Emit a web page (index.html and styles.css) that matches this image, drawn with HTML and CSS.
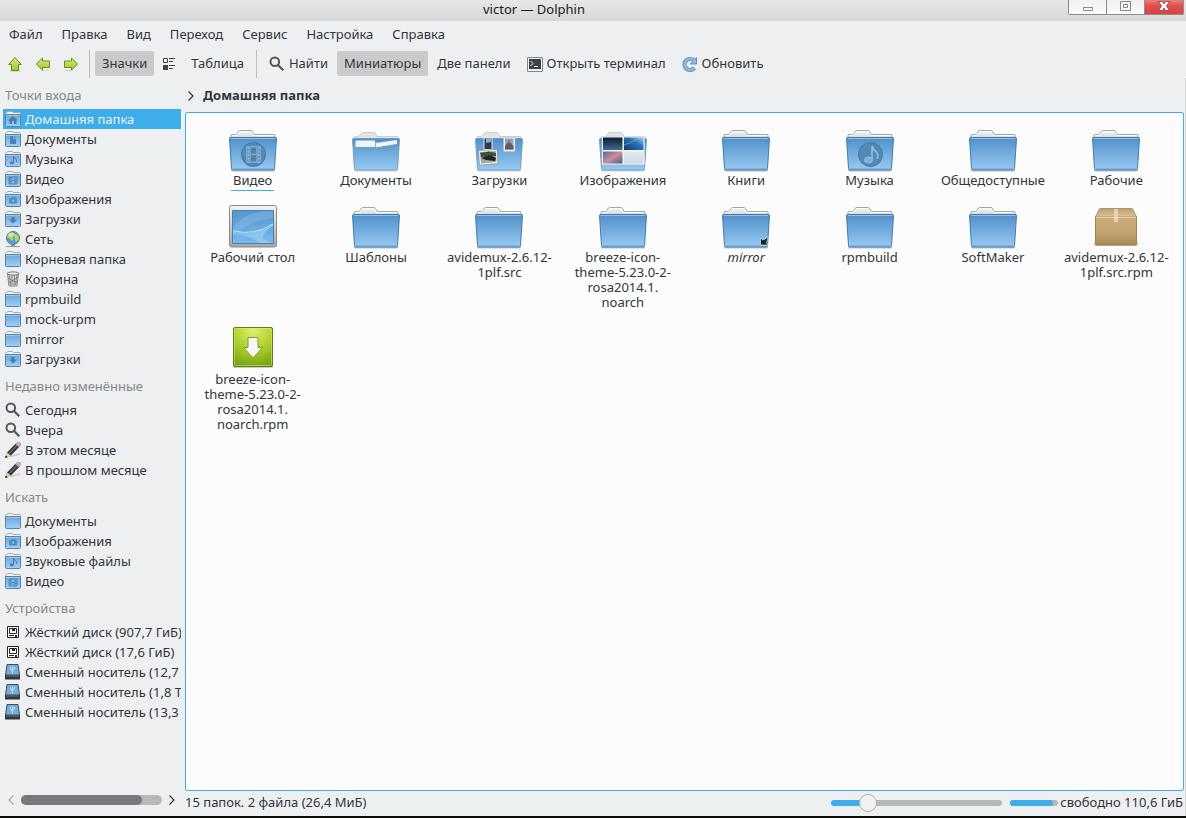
FILE: index.html
```html
<!DOCTYPE html>
<html lang="ru">
<head>
<meta charset="utf-8">
<title>victor — Dolphin</title>
<link rel="stylesheet" href="styles.css">
</head>
<body>
<svg class="sprite" width="0" height="0" aria-hidden="true">
  <defs>
    <linearGradient id="g-blue" x1="0" y1="0" x2="0" y2="1"><stop offset="0" stop-color="#4f90c8"/><stop offset="1" stop-color="#98caf3"/></linearGradient>
    <linearGradient id="g-tab" x1="0" y1="0" x2="0" y2="1"><stop offset="0" stop-color="#f6f6f6"/><stop offset="1" stop-color="#c9c9c9"/></linearGradient>
    <linearGradient id="g-small" x1="0" y1="0" x2="0" y2="1"><stop offset="0" stop-color="#6aa6d9"/><stop offset="1" stop-color="#a0d0f7"/></linearGradient>
    <linearGradient id="g-green" x1="0" y1="0" x2="0" y2="1"><stop offset="0" stop-color="#dcec7a"/><stop offset="1" stop-color="#9dc62f"/></linearGradient>
    <radialGradient id="g-lime" cx=".5" cy=".05" r="1"><stop offset="0" stop-color="#e2f26e"/><stop offset=".5" stop-color="#b0d02f"/><stop offset="1" stop-color="#74a214"/></radialGradient>
    <linearGradient id="g-box" x1="0" y1="0" x2="0" y2="1"><stop offset="0" stop-color="#cfae7c"/><stop offset=".6" stop-color="#c0a06c"/><stop offset="1" stop-color="#a88858"/></linearGradient>
    <linearGradient id="g-lid" x1="0" y1="0" x2="0" y2="1"><stop offset="0" stop-color="#bd9b6b"/><stop offset="1" stop-color="#dcc49c"/></linearGradient>
    <linearGradient id="g-frame" x1="0" y1="0" x2="0" y2="1"><stop offset="0" stop-color="#f4f4f4"/><stop offset="1" stop-color="#a5a5a5"/></linearGradient>
    <linearGradient id="g-screen" x1="0" y1="0" x2="0" y2="1"><stop offset="0" stop-color="#5795cc"/><stop offset="1" stop-color="#76bbee"/></linearGradient>
    <linearGradient id="g-night" x1="0" y1="0" x2="0" y2="1"><stop offset="0" stop-color="#0c1d35"/><stop offset="1" stop-color="#3f6a8c"/></linearGradient>
    <linearGradient id="g-sea" x1="0" y1="1" x2="1" y2="0"><stop offset="0" stop-color="#0e3a74"/><stop offset=".6" stop-color="#2d72b4"/><stop offset="1" stop-color="#a9cdec"/></linearGradient>
    <linearGradient id="g-dusk" x1="0" y1="0" x2="1" y2="1"><stop offset="0" stop-color="#55659f"/><stop offset=".5" stop-color="#cf8d99"/><stop offset="1" stop-color="#3e5d9a"/></linearGradient>
    <linearGradient id="g-cloud" x1="0" y1="0" x2="0" y2="1"><stop offset="0" stop-color="#e4e8ea"/><stop offset="1" stop-color="#c8dcea"/></linearGradient>
  </defs>

  <symbol id="folder" viewBox="0 0 48 48">
    <rect x="2" y="44" width="44" height="2.4" rx="1" fill="#000" opacity=".22"/>
    <path d="M2 16V10.500q0-1 1-1H6.500Q7.500 9.500 8 8.500L9.500 6Q10 5.500 11 5.500H22Q23 5.500 23.500 6.500L25 9.500H45q1 0 1 1V16Z" fill="url(#g-tab)" stroke="#a4a4a4"/>
    <path d="M3 10.500H7.500Q8.500 10 9.500 7.500 10 6.500 11 6.500H21.500L24.500 10.500H45" fill="none" stroke="#fff"/>
    <path d="M1.500 12.500H46.500q1 0 1 1L45.500 43.500q0 1.500-1.500 1.500H4q-1.500 0-1.500-1.500L.5 13.500q0-1 1-1Z" fill="url(#g-blue)" stroke="#417cac"/>
    <path d="M1.800 13.500H46.200" stroke="#8fc0e8"/>
    <path d="M4 44H44" stroke="#659bc8"/>
  </symbol>
  <symbol id="pfolder" viewBox="0 0 48 48">
    <rect x="2" y="44" width="44" height="2.400" rx="1" fill="#000" opacity=".15"/>
    <path d="M2 16V12.500q0-1 1-1H6.500L9.500 8Q10 7.500 11 7.500H22Q23 7.500 23.500 8.500L25 11.500H45q1 0 1 1V16Z" fill="#e4e4e4" stroke="#cccccc"/>
    <path d="M1.500 13.500H46.500q1 0 1 1L45.500 43.500q0 1.500-1.500 1.500H4q-1.500 0-1.500-1.500L.5 14.500q0-1 1-1Z" fill="url(#g-blue)" stroke="#6a9dc6"/>
  </symbol>
  <symbol id="sfolder" viewBox="0 0 16 16">
    <path d="M.5 5V2.500q0-.8.8-.8L3 .5H7L8.500 1.500H14.700q.8 0 .8 1V5Z" fill="#f3f3f3" stroke="#aaa"/>
    <path d="M.5 3.500H15.500V14.500q0 1-1 1H1.500q-1 0-1-1Z" fill="url(#g-small)" stroke="#5285b2"/>
    <path d="M1 4.500H15" stroke="#9bc9ee"/>
  </symbol>
  <symbol id="s-home" viewBox="0 0 16 16"><use href="#sfolder"/><path d="M8 5L13 9.500H11.500V13H9V10H7V13H4.500V9.500H3Z" fill="#4a7ca8"/></symbol>
  <symbol id="s-doc" viewBox="0 0 16 16"><use href="#sfolder"/><path d="M5 5H8V8H11V13H5ZM9 5L11 7H9Z" fill="#4f84b0"/></symbol>
  <symbol id="s-music" viewBox="0 0 16 16"><use href="#sfolder"/><path d="M8.500 5V11.500M8.500 5.500L11.500 9V11" fill="none" stroke="#4a7ca8"/><ellipse cx="6.800" cy="12" rx="2" ry="1.400" fill="#4a7ca8"/></symbol>
  <symbol id="s-video" viewBox="0 0 16 16"><use href="#sfolder"/><path d="M4 6H12V13H4ZM6 6V13M10 6V13M4 8.300H6M4 10.700H6M10 8.300H12M10 10.700H12M6 9.500H10" fill="#84b6df" stroke="#4f84b0" stroke-width=".9"/></symbol>
  <symbol id="s-photo" viewBox="0 0 16 16"><use href="#sfolder"/><path d="M4 7H6L7 6H10L11 7H12V12.500H4Z" fill="#5a90bd"/><circle cx="8.200" cy="9.700" r="1.900" fill="#8dbde4" stroke="#4a7ca8"/></symbol>
  <symbol id="s-down" viewBox="0 0 16 16"><use href="#sfolder"/><path d="M6.500 6H9.500V8.500H12L8 12.500 4 8.500H6.500Z" fill="#4a7ca8"/></symbol>
  <symbol id="s-net" viewBox="0 0 16 16">
    <circle cx="8" cy="7" r="6.500" fill="#5c98d2" stroke="#5680a8"/><path d="M4 2Q8 0 9 3L7 5.500 8.500 8 7 10 5 8 2 6ZM10 3L13 4 14 8 11 11 9.500 8Z" fill="#b6d84b"/><ellipse cx="7" cy="3.800" rx="3.500" ry="2" fill="#fff" opacity=".45"/><path d="M1 15.500H15M6 14.500H10" stroke="#999"/>
  </symbol>
  <symbol id="s-trash" viewBox="0 0 16 16">
    <path d="M2.500 2.500H13.500L12 15H4Z" fill="#d7d7d7" stroke="#888"/><path d="M4.500 4L5.500 14M7 4V14M9.500 4L9 14M12 4L10.500 14M3 7L12 12M4 12L13 6" stroke="#777" stroke-width=".8"/><ellipse cx="8" cy="2.500" rx="6" ry="1.600" fill="#eee" stroke="#777"/>
  </symbol>
  <symbol id="s-find" viewBox="0 0 16 16"><circle cx="5.800" cy="5.800" r="4.300" fill="none" stroke="#555" stroke-width="2"/><path d="M9 9L14.300 14.300" stroke="#555" stroke-width="2.200"/></symbol>
  <symbol id="s-pencil" viewBox="0 0 16 16">
    <path d="M5 14.500L15 12" stroke="#ccc" stroke-width="1.500"/>
    <path d="M1 15L2 10.500 6 13.500Z" fill="#e9dd8e" stroke="#aaa36a" stroke-width=".5"/><path d="M0 16L.8 13.500 2.800 15.200Z" fill="#111"/>
    <path d="M2 10.500L10.500 1.800 14.200 5 6 13.500Z" fill="#3a3a3a"/><path d="M4 11.500L12.200 3.300" stroke="#8c8c8c"/>
    <path d="M10.500 2L12.500.5Q14-.2 15.300 1T15.500 3L14 5Z" fill="#d9a3d0" stroke="#a974a0" stroke-width=".6"/>
  </symbol>
  <symbol id="s-disk" viewBox="0 0 16 16"><path d="M2.500 2.500H13.500V13.500H2.500Z" fill="#fcfcfc" stroke="#232629"/><path d="M4.500 4.500H11.500V9.500H4.500Z" fill="none" stroke="#232629"/><path d="M7 5H10V7H7ZM4 11H9V12H4ZM10 11H12V13H10Z" fill="#232629"/></symbol>
  <symbol id="s-usb" viewBox="0 0 16 16"><path d="M2 .5H13L14.500 11H.5Z" fill="#72aee0" stroke="#424f59"/><path d="M0 11H15V15.500H0Z" fill="#32383d"/><path d="M1.500 12H13.500" stroke="#777"/><path d="M7.500 9.500V2.500M5.500 3V5L7.500 7M9.500 3V4.500L7.500 6" fill="none" stroke="#d8efff" stroke-width=".8"/></symbol>

  <symbol id="t-up" viewBox="0 0 16 16"><path d="M3 15H13" stroke="#c3c9b8"/><path d="M8 1.500L14.300 8.500H11.500V14.500H4.500V8.500H1.700Z" fill="url(#g-green)" stroke="#668f22"/></symbol>
  <symbol id="t-left" viewBox="0 0 16 16"><path d="M6 14.500H14" stroke="#d3d7cc"/><path d="M1.300 8L7.500 2V5H14.500V11.500H7.500V14Z" fill="url(#g-green)" stroke="#668f22"/></symbol>
  <symbol id="t-right" viewBox="0 0 16 16"><path d="M2 14.500H10" stroke="#d3d7cc"/><path d="M14.700 8L8.500 2V5H1.500V11.500H8.500V14Z" fill="url(#g-green)" stroke="#668f22"/></symbol>
  <symbol id="t-list" viewBox="0 0 16 16"><path d="M2.500 2.500H6.500V6.500H2.500Z" fill="none" stroke="#444"/><path d="M2 9H7V14H2Z" fill="#444"/><path d="M8 2.500H14M8 5.500H12M8 9.500H14M8 12.500H12" stroke="#444"/></symbol>
  <symbol id="t-term" viewBox="0 0 16 16"><path d="M.5 1.500H15.500V15.500H.5Z" fill="#f4f4f4" stroke="#858585"/><path d="M2 3H14V13H2Z" fill="#3a4549"/><path d="M3.500 5L6 7.500 3.500 10M7 10.500H11" fill="none" stroke="#fff"/></symbol>
  <symbol id="t-refresh" viewBox="0 0 16 16"><path d="M12.500 12Q10 14.500 7 14 2.500 13 2.500 8.500 2.500 4 7 3 9.500 2.500 11.500 4" fill="none" stroke="#5b90c2" stroke-width="4"/><path d="M14.500 1.500V8H8Z" fill="#8ebbe2" stroke="#5b90c2"/><path d="M12 12Q10 14.500 7 14 2.700 13 2.700 8.500 2.700 4 7 3 9.500 2.700 12 4.500" fill="none" stroke="#8ebbe2" stroke-width="2.300"/></symbol>
  <symbol id="chev-r" viewBox="0 0 8 12"><path d="M1.500 1.500L6 6 1.500 10.500" fill="none" stroke="currentColor" stroke-width="1.200"/></symbol>
  <symbol id="chev-l" viewBox="0 0 8 12"><path d="M6.500 1.500L2 6 6.500 10.500" fill="none" stroke="currentColor" stroke-width="1.200"/></symbol>
</svg>

<header class="titlebar">
  <h1 class="title">victor — Dolphin</h1>
  <div class="wm">
    <button class="wm-btn" aria-label="Свернуть"><svg width="12" height="14" viewBox="0 0 12 14"><path d="M1.500 7.500H10.500V10.500H1.500Z" fill="#fff" stroke="#888"/></svg></button>
    <button class="wm-btn" aria-label="Развернуть"><svg width="12" height="14" viewBox="0 0 12 14"><path d="M.5 1.500H10.500V10.500H.5ZM3.500 4.500H7.500V7.500H3.500Z" fill="none" stroke="#888"/></svg></button>
    <button class="wm-btn wm-close" aria-label="Закрыть"><svg width="12" height="14" viewBox="0 0 12 14"><path d="M.5 1.500H4.500L6 4 7.500 1.500H11.500L8.500 6 11.500 10.500H7.500L6 8 4.500 10.500H.5L3.500 6Z" fill="#fff" stroke="#8e3a3a" stroke-width=".8"/></svg></button>
  </div>
</header>

<nav class="menubar">
  <button class="menu">Файл</button><button class="menu">Правка</button><button class="menu">Вид</button><button class="menu">Переход</button><button class="menu">Сервис</button><button class="menu">Настройка</button><button class="menu">Справка</button>
</nav>

<div class="toolbar">
  <button class="tool tool-icon" aria-label="Вверх"><svg class="i16"><use href="#t-up"/></svg></button>
  <button class="tool tool-icon" aria-label="Назад"><svg class="i16"><use href="#t-left"/></svg></button>
  <button class="tool tool-icon" aria-label="Вперёд"><svg class="i16"><use href="#t-right"/></svg></button>
  <span class="sep"></span>
  <button class="tool on">Значки</button>
  <button class="tool tool-icon" aria-label="Список"><svg class="i16"><use href="#t-list"/></svg></button>
  <button class="tool">Таблица</button>
  <span class="sep"></span>
  <button class="tool"><svg class="i16"><use href="#s-find"/></svg>Найти</button>
  <button class="tool on">Миниатюры</button>
  <button class="tool">Две панели</button>
  <button class="tool"><svg class="i16"><use href="#t-term"/></svg>Открыть терминал</button>
  <button class="tool"><svg class="i16"><use href="#t-refresh"/></svg>Обновить</button>
</div>

<div class="work">
  <aside class="side">
    <div class="places">
      <h2 class="group">Точки входа</h2>
      <a href="#" class="place active"><svg class="i16"><use href="#s-home"/></svg>Домашняя папка</a>
      <a href="#" class="place"><svg class="i16"><use href="#s-doc"/></svg>Документы</a>
      <a href="#" class="place"><svg class="i16"><use href="#s-music"/></svg>Музыка</a>
      <a href="#" class="place"><svg class="i16"><use href="#s-video"/></svg>Видео</a>
      <a href="#" class="place"><svg class="i16"><use href="#s-photo"/></svg>Изображения</a>
      <a href="#" class="place"><svg class="i16"><use href="#s-down"/></svg>Загрузки</a>
      <a href="#" class="place"><svg class="i16"><use href="#s-net"/></svg>Сеть</a>
      <a href="#" class="place"><svg class="i16"><use href="#sfolder"/></svg>Корневая папка</a>
      <a href="#" class="place"><svg class="i16"><use href="#s-trash"/></svg>Корзина</a>
      <a href="#" class="place"><svg class="i16"><use href="#sfolder"/></svg>rpmbuild</a>
      <a href="#" class="place"><svg class="i16"><use href="#sfolder"/></svg>mock-urpm</a>
      <a href="#" class="place"><svg class="i16"><use href="#sfolder"/></svg>mirror</a>
      <a href="#" class="place"><svg class="i16"><use href="#s-down"/></svg>Загрузки</a>
      <h2 class="group">Недавно изменённые</h2>
      <a href="#" class="place"><svg class="i16"><use href="#s-find"/></svg>Сегодня</a>
      <a href="#" class="place"><svg class="i16"><use href="#s-find"/></svg>Вчера</a>
      <a href="#" class="place"><svg class="i16"><use href="#s-pencil"/></svg>В этом месяце</a>
      <a href="#" class="place"><svg class="i16"><use href="#s-pencil"/></svg>В прошлом месяце</a>
      <h2 class="group">Искать</h2>
      <a href="#" class="place"><svg class="i16"><use href="#sfolder"/></svg>Документы</a>
      <a href="#" class="place"><svg class="i16"><use href="#s-photo"/></svg>Изображения</a>
      <a href="#" class="place"><svg class="i16"><use href="#s-music"/></svg>Звуковые файлы</a>
      <a href="#" class="place"><svg class="i16"><use href="#s-video"/></svg>Видео</a>
      <h2 class="group">Устройства</h2>
      <a href="#" class="place"><svg class="i16"><use href="#s-disk"/></svg>Жёсткий диск (907,7 ГиБ)</a>
      <a href="#" class="place"><svg class="i16"><use href="#s-disk"/></svg>Жёсткий диск (17,6 ГиБ)</a>
      <a href="#" class="place"><svg class="i16"><use href="#s-usb"/></svg>Сменный носитель (12,7 ГиБ)</a>
      <a href="#" class="place"><svg class="i16"><use href="#s-usb"/></svg>Сменный носитель (1,8 ТиБ)</a>
      <a href="#" class="place"><svg class="i16"><use href="#s-usb"/></svg>Сменный носитель (13,3 ГиБ)</a>
    </div>
    <div class="scroll">
      <button class="scroll-btn off" aria-label="Влево"><svg width="8" height="12"><use href="#chev-l"/></svg></button>
      <div class="scroll-track"><div class="scroll-thumb"></div></div>
      <button class="scroll-btn" aria-label="Вправо"><svg width="8" height="12"><use href="#chev-r"/></svg></button>
    </div>
  </aside>

  <main class="main">
    <div class="crumbs"><svg width="8" height="12"><use href="#chev-r"/></svg><a href="#" class="crumb">Домашняя папка</a></div>
    <div class="view">
      <a href="#" class="file"><svg class="i48" viewBox="0 0 48 48"><use href="#folder"/><circle cx="24.500" cy="29.500" r="12" fill="#5489b5" stroke="#44789f"/><path d="M17.500 21.500H31.500V37.500H17.500ZM21 21.500V37.500M28 21.500V37.500M21 29.500H28" fill="#6899c3" stroke="#7aaad2"/><path d="M19.300 22.500V37.500M29.800 22.500V37.500" stroke="#96c0e3" stroke-width="1.500" stroke-dasharray="1.500 2"/><path d="M22 23H27V28.500H22ZM22 30.500H27V36H22Z" fill="#4d82af"/></svg><span class="name hover">Видео</span></a>
      <a href="#" class="file"><svg class="i48" viewBox="0 0 48 48"><use href="#pfolder"/><path d="M3.500 15.500H23V22H3.500Z" fill="#f4f4f4"/><path d="M23.500 18L45 15V19.500L24 23Z" fill="#f4f4f4"/><path d="M23.500 23L45 19.500" stroke="#6d95b6"/></svg><span class="name">Документы</span></a>
      <a href="#" class="file"><svg class="i48" viewBox="0 0 48 48"><use href="#pfolder"/><path d="M8.500 12.500H17.500V25H8.500Z" fill="#dfe6ec"/><path d="M9.500 13.500H16.500V24H9.500Z" fill="#303a46"/><path d="M11 13.500H16.500V17L11 18Z" fill="#87a9cf"/><path d="M28.500 12.500H40V26.500H28.500Z" fill="#f5f5f5" stroke="#aeb8c1" stroke-width=".5"/><path d="M30 13.500H38.500V24.500H30Z" fill="#8fa6c2"/><path d="M30 21L34 17 38.500 21V24.500H30Z" fill="#605b5d"/><path d="M34 15V23M31.500 19H37" stroke="#8a5058"/><path d="M3.500 25.500L22 24.500 23 38.500 4.500 40Z" fill="#f5f5f5" stroke="#777" stroke-width=".5"/><path d="M5 27L20.800 26 21.500 37 6 38.500Z" fill="#a3a99b"/><path d="M5.200 28L14 26.500 21 28V31L6 32Z" fill="#3e5039"/><path d="M6 33L15 30 21 33 20 36 11 35Z" fill="#20262b"/></svg><span class="name">Загрузки</span></a>
      <a href="#" class="file"><svg class="i48" viewBox="0 0 48 48"><use href="#pfolder"/><path d="M3 11.500H45.500V39.500H3Z" fill="#f6f6f6" stroke="#cfd5da" stroke-width=".5"/><path d="M4 12.500H23.500V25H4Z" fill="url(#g-night)"/><path d="M25 12.500H44.500V25H25Z" fill="url(#g-sea)"/><path d="M4 26.500H23.500V38.500H4Z" fill="url(#g-dusk)"/><path d="M25 26.500H44.500V38.500H25Z" fill="url(#g-cloud)"/><path d="M25 20Q32 18 36 15T44 16" fill="none" stroke="#7db3df" opacity=".6"/></svg><span class="name">Изображения</span></a>
      <a href="#" class="file"><svg class="i48"><use href="#folder"/></svg><span class="name">Книги</span></a>
      <a href="#" class="file"><svg class="i48" viewBox="0 0 48 48"><use href="#folder"/><circle cx="24.500" cy="29.500" r="12" fill="#5489b5" stroke="#44789f"/><path d="M26 21V34M26 21Q27 24.500 30 26.500 33 29.500 31 34" fill="none" stroke="#8fc0e8" stroke-width="1.600"/><ellipse cx="22.500" cy="35" rx="4" ry="3" fill="#7fb1dc" stroke="#8fc0e8"/></svg><span class="name">Музыка</span></a>
      <a href="#" class="file"><svg class="i48"><use href="#folder"/></svg><span class="name">Общедоступные</span></a>
      <a href="#" class="file"><svg class="i48"><use href="#folder"/></svg><span class="name">Рабочие</span></a>
      <a href="#" class="file"><svg class="i48" viewBox="0 0 48 48"><rect x=".5" y="3.500" width="47" height="41.500" rx="2" fill="url(#g-frame)" stroke="#8b8b8b"/><path d="M3.500 8.500H44.500V41.500H3.500Z" fill="url(#g-screen)" stroke="#4a7fae"/><path d="M4 26Q17 8 44 9V16Q20 18 4 34Z" fill="#8fc3ec" opacity=".35"/><path d="M4 30Q23 36 44 21V24Q24 37 44 41H30Q22 33 4 32Z" fill="#a9daf8" opacity=".5"/><path d="M4 29Q25 34 44 22" fill="none" stroke="#b9e3fb"/></svg><span class="name">Рабочий стол</span></a>
      <a href="#" class="file"><svg class="i48"><use href="#folder"/></svg><span class="name">Шаблоны</span></a>
      <a href="#" class="file"><svg class="i48"><use href="#folder"/></svg><span class="name">avidemux-2.6.12-<br>1plf.src</span></a>
      <a href="#" class="file"><svg class="i48"><use href="#folder"/></svg><span class="name">breeze-icon-<br>theme-5.23.0-2-<br>rosa2014.1.<br>noarch</span></a>
      <a href="#" class="file"><svg class="i48" viewBox="0 0 48 48"><use href="#folder"/><path d="M44.500 34.500Q46.500 38 44.500 40.500L46 43H38.500V36L41 38Q44 37.500 44.500 34.500Z" fill="#1d2226" stroke="#d7e5ef" stroke-width=".7"/></svg><span class="name link">mirror</span></a>
      <a href="#" class="file"><svg class="i48"><use href="#folder"/></svg><span class="name">rpmbuild</span></a>
      <a href="#" class="file"><svg class="i48"><use href="#folder"/></svg><span class="name">SoftMaker</span></a>
      <a href="#" class="file"><svg class="i48" viewBox="0 0 48 48"><path d="M2 40H46V43Q46 44 44 44H4Q2 44 2 43Z" fill="#000" opacity=".18"/><path d="M3.500 14.500H44.500V41.500q0 1.500-1.500 1.500H5q-1.500 0-1.500-1.500Z" fill="url(#g-box)" stroke="#a18052"/><path d="M3.500 15L7 7.500Q7.500 6.500 9 6.500H39Q40.500 6.500 41 7.500L44.500 15Z" fill="url(#g-lid)" stroke="#b39366"/><path d="M4 15.500H44" stroke="#e5d1b0"/><path d="M22 7H26V20H22Z" fill="#ebddc3" opacity=".75"/></svg><span class="name">avidemux-2.6.12-<br>1plf.src.rpm</span></a>
      <a href="#" class="file"><svg class="i48" viewBox="0 0 48 48"><rect x="4" y="42" width="40" height="2" rx="1" fill="#000" opacity=".2"/><rect x="4.500" y="3.500" width="39" height="39" rx="1.500" fill="url(#g-lime)" stroke="#55811b"/><rect x="5.500" y="4.500" width="37" height="37" rx="1" fill="none" stroke="#d9ed7a" opacity=".55"/><path d="M19 13.500H29V23.500H33.500L24 34 14.500 23.500H19Z" fill="#f7f7f7" stroke="#7ba222"/></svg><span class="name">breeze-icon-<br>theme-5.23.0-2-<br>rosa2014.1.<br>noarch.rpm</span></a>
    </div>
    <footer class="status">
      <span class="summary">15 папок. 2 файла (26,4 МиБ)</span>
      <input class="zoom" type="range" min="0" max="100" value="18" aria-label="Размер значков">
      <progress class="space" value="88" max="100" aria-label="Занято на диске"></progress>
      <span class="free">свободно 110,6 ГиБ</span>
    </footer>
  </main>
</div>
</body>
</html>
```
FILE: styles.css
```css
* { box-sizing: border-box; }

body {
  margin: 0;
  height: 100vh;
  display: flex;
  flex-direction: column;
  overflow: hidden;
  background: #eeeff1;
  border-bottom: 2px solid #0b0d07;
  color: #31363b;
  font: 13px/15px "Noto Sans", "Open Sans", sans-serif;
}

button {
  border: 0;
  margin: 0;
  padding: 0;
  background: none;
  color: inherit;
  font: inherit;
}

a { color: inherit; text-decoration: none; }

.sprite { position: absolute; }
.i16 { width: 16px; height: 16px; flex: none; }
.i48 { width: 48px; height: 48px; flex: none; }

.titlebar {
  display: flex;
  height: 21px;
  flex: none;
  padding-right: 2px;
  background: linear-gradient(#e7e7e7, #d8d8d8);
}
.title {
  flex: 1;
  margin: 0;
  font-size: 13px;
  line-height: 19px;
  font-weight: 400;
  text-align: center;
  color: #1a1a1a;
}
.wm {
  display: flex;
  height: 15px;
  border: 1px solid #8d8d8d;
  border-top: 0;
  border-radius: 0 0 2px 2px;
}
.wm-btn {
  display: flex;
  justify-content: center;
  width: 38px;
  background: linear-gradient(#f0f0f0, #fbfbfb);
  border-right: 1px solid #8d8d8d;
}
.wm-close {
  background: linear-gradient(#e88080, #e05050 40%, #df3f3f);
  border-right: 0;
}

.menubar {
  display: flex;
  flex: none;
  gap: 19px;
  height: 27px;
  padding-left: 9px;
}

.toolbar {
  display: flex;
  flex: none;
  align-items: center;
  gap: 2px;
  height: 30px;
  padding: 1px 0 0 2px;
}
.tool {
  display: flex;
  align-items: center;
  gap: 4px;
  height: 25px;
  padding: 0 7px;
  border-radius: 2px;
  white-space: nowrap;
}
.tool-icon { padding: 0 5px; }
.on { background: #c9cacc; }
.sep {
  width: 1px;
  height: 28px;
  margin: 0 3px;
  background: #bcbec0;
}

.work { display: flex; flex: 1; min-height: 0; }

.side {
  display: flex;
  flex-direction: column;
  width: 185px;
  flex: none;
}
.places { flex: 1; padding: 0 4px 0 3px; overflow: hidden; }
.group {
  margin: 0;
  padding: 10px 0 6px 2px;
  font-size: 13px;
  line-height: 15px;
  font-weight: 400;
  color: #86898c;
}
.place {
  display: flex;
  align-items: center;
  gap: 4px;
  height: 20px;
  padding-left: 2px;
  overflow: hidden;
  white-space: nowrap;
}
.active { background: #3daee9; color: #eff0f1; }

.scroll {
  display: flex;
  align-items: center;
  gap: 6px;
  height: 32px;
  padding: 0 9px 0 7px;
}
.scroll-btn { display: flex; }
.off { color: #aaacae; }
.scroll-track { flex: 1; height: 10px; border-radius: 5px; background: #b7b8ba; }
.scroll-thumb { width: 86%; height: 10px; border-radius: 5px; background: #75797d; }

.main {
  display: flex;
  flex-direction: column;
  flex: 1;
  min-width: 0;
  padding-right: 1px;
  border-right: 1px solid #d4d5d6;
}
.crumbs {
  display: flex;
  align-items: center;
  gap: 8px;
  height: 34px;
  padding: 1px 0 0 2px;
}
.crumb { font-weight: 700; }

.view {
  display: grid;
  flex: 1;
  grid-template-columns: repeat(auto-fill, minmax(120px, 1fr));
  align-content: start;
  row-gap: 14px;
  padding: 12px 5px;
  overflow: hidden;
  background: #fcfcfc;
  border: 1px solid #3daee9;
  border-radius: 2px;
}
.file {
  display: flex;
  flex-direction: column;
  align-items: center;
  text-align: center;
}
.hover {
  height: 18px;
  margin-bottom: -3px;
  padding: 0 2px;
  border-bottom: 1px solid #3daee9;
}
.link { font-style: italic; }

.status {
  display: flex;
  align-items: center;
  height: 25px;
  padding: 0 1px 2px 0;
  white-space: nowrap;
}
.summary { flex: 1; }

.zoom {
  appearance: none;
  width: 171px;
  height: 18px;
  margin: 0 8px 0 0;
  background: none;
}
.zoom::-webkit-slider-runnable-track {
  height: 6px;
  border-radius: 3px;
  background: linear-gradient(90deg, #3daee9 22%, #b7b8ba 22%);
}
.zoom::-webkit-slider-thumb {
  appearance: none;
  width: 18px;
  height: 18px;
  margin-top: -6px;
  border: 1px solid #aeb0b2;
  border-radius: 9px;
  background: #f1f2f3;
}
.space {
  appearance: none;
  width: 48px;
  height: 6px;
  margin-right: 2px;
}
.space::-webkit-progress-bar { border-radius: 3px; background: #b7b8ba; }
.space::-webkit-progress-value { border-radius: 3px; background: #3daee9; }
```
